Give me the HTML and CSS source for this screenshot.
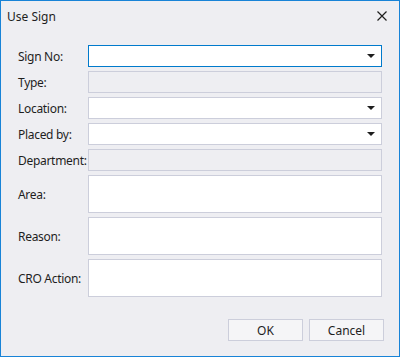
FILE: index.html
```html
<!DOCTYPE html>
<html lang="en">
<head>
    <meta charset="UTF-8">
    <title>Use Sign</title>
    <link rel="stylesheet" href="styles.css">
</head>
<body>

<div class="dialog">
    <header class="titlebar">
        <span class="title">Use Sign</span>
        <button class="close" aria-label="Close">
            <svg width="10" height="10" viewBox="0 0 10 10"><path d="M0.5 0.5L9.5 9.5M9.5 0.5L0.5 9.5" stroke="#1e1e1e" stroke-width="1.2"/></svg>
        </button>
    </header>

    <form class="form">
        <label class="label">Sign No:</label>
        <div class="field combo focused"><span class="arrow"></span></div>

        <label class="label">Type:</label>
        <div class="field disabled"></div>

        <label class="label">Location:</label>
        <div class="field combo"><span class="arrow"></span></div>

        <label class="label">Placed by:</label>
        <div class="field combo"><span class="arrow"></span></div>

        <label class="label">Department:</label>
        <div class="field disabled"></div>

        <label class="label">Area:</label>
        <div class="field multi"></div>

        <label class="label">Reason:</label>
        <div class="field multi"></div>

        <label class="label">CRO Action:</label>
        <div class="field multi"></div>
    </form>

    <div class="actions">
        <button class="button">OK</button>
        <button class="button">Cancel</button>
    </div>
</div>

</body>
</html>
```

FILE: styles.css
```css
body {
    margin: 0;
    padding: 0;
    font-family: "Noto Sans", "Open Sans", sans-serif;
    font-size: 12px;
    color: #1e1e1e;
}
.dialog {
    box-sizing: border-box;
    width: 400px;
    height: 357px;
    border: 1px solid #1883d7;
    background-color: #eeeef2;
}
.titlebar {
    display: flex;
    align-items: center;
    justify-content: space-between;
    height: 30px;
    padding: 0 12px 0 6px;
}
.title {
    font-size: 12px;
}
.close {
    border: none;
    background: none;
    padding: 0;
    width: 10px;
    height: 10px;
    display: flex;
}
.form {
    display: grid;
    grid-template-columns: 70px 1fr;
    row-gap: 4px;
    padding: 14px 17px 0 17px;
}
.label {
    display: flex;
    align-items: center;
    letter-spacing: -0.3px;
    white-space: nowrap;
}
.field {
    box-sizing: border-box;
    height: 22px;
    border: 1px solid #cccedb;
    background-color: #fff;
    position: relative;
}
.field.disabled {
    background-color: #eeeef2;
}
.field.focused {
    border-color: #007acc;
}
.field.multi {
    height: 38px;
}
.arrow {
    position: absolute;
    right: 6px;
    top: 8px;
    width: 0;
    height: 0;
    border-left: 4px solid transparent;
    border-right: 4px solid transparent;
    border-top: 4px solid #1e1e1e;
}
.actions {
    display: flex;
    justify-content: flex-end;
    gap: 6px;
    padding: 22px 15px 0 0;
}
.button {
    box-sizing: border-box;
    width: 75px;
    height: 22px;
    border: 1px solid #cccedb;
    background-color: #f5f5f7;
    font-family: inherit;
    font-size: 12px;
    color: #1e1e1e;
    padding: 0;
}
```
